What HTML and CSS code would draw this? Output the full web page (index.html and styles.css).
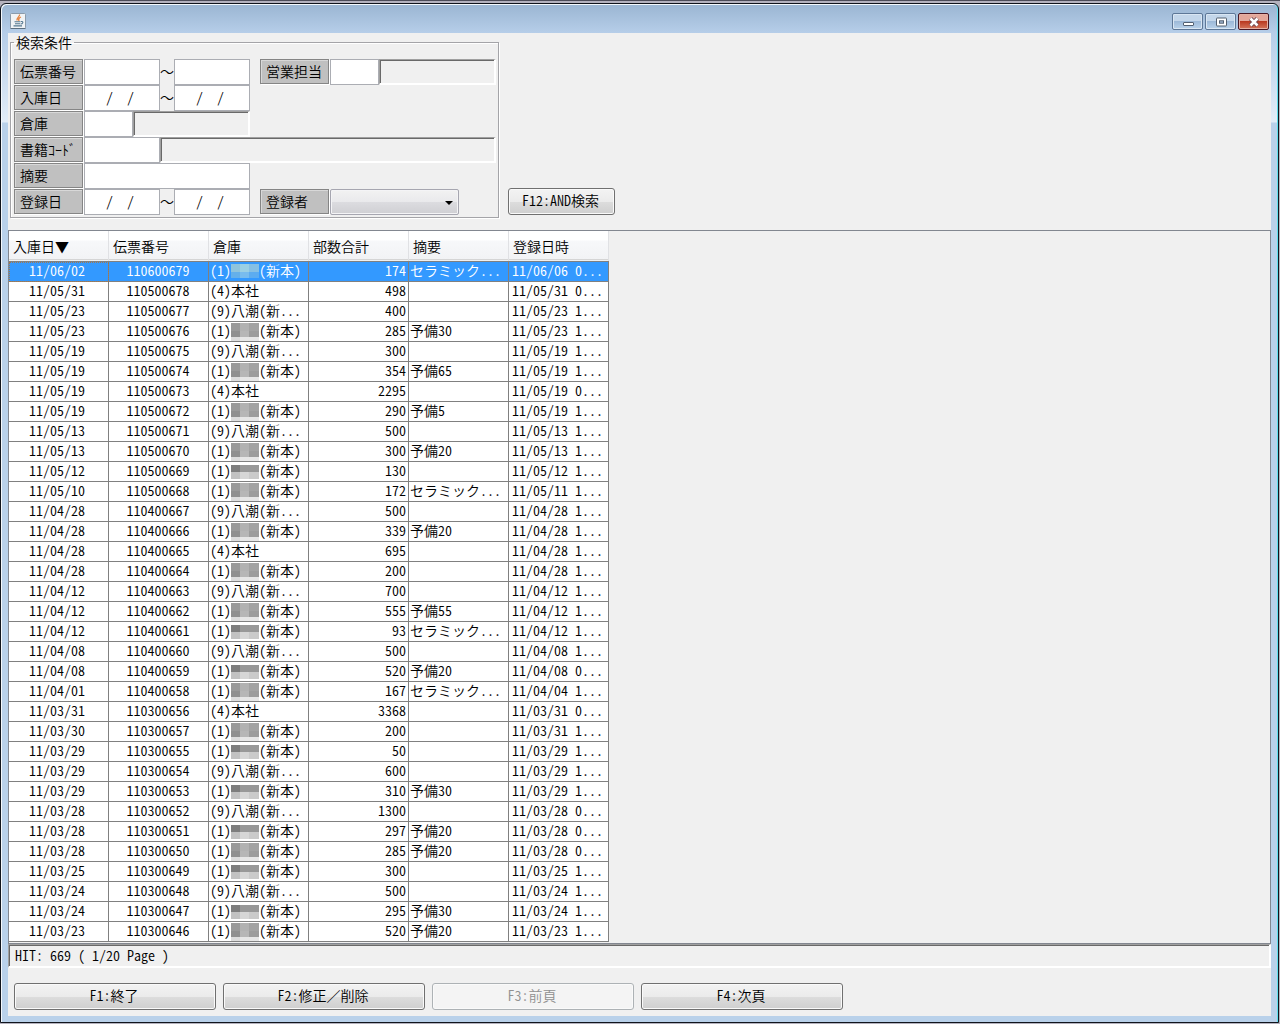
FILE: index.html
```html
<!DOCTYPE html>
<html lang="ja">
<head>
<meta charset="utf-8">
<title>入庫検索</title>
<link rel="stylesheet" href="styles.css">
</head>
<body>
<div class="window">
  <header class="titlebar">
    <svg class="app-icon" width="16" height="16" viewBox="0 0 16 16" aria-hidden="true">
      <rect x="0.5" y="0.5" width="15" height="15" rx="1" fill="#f1f3f5" stroke="#8b9bab"/>
      <path d="M0.5 15.5H15.5" stroke="#5d6f80"/>
      <path d="M9.500 1.500C10 4 6 4.500 7.200 7.500M11 4C8 5 8.500 6.500 9 8" fill="none" stroke="#e5803a" stroke-width="1.300"/>
      <path d="M4.500 8.800H10.500M5 10.800H10M11 8.500C14 8 13 11 10.500 11M3.500 12.900H12" fill="none" stroke="#55788f" stroke-width="1.100"/>
    </svg>
    <div class="window-buttons">
      <button class="wb" type="button" aria-label="最小化"><svg width="12" height="12" viewBox="0 0 12 12"><rect x="1.500" y="6.500" width="10" height="3" rx="0.500" fill="#fff" stroke="#536071"/></svg></button>
      <button class="wb" type="button" aria-label="最大化"><svg width="12" height="12" viewBox="0 0 12 12"><rect x="1.500" y="2" width="10" height="8" rx="0.500" fill="#fff" stroke="#536071"/><rect x="4.500" y="4.800" width="4" height="2.400" fill="#9fb6d0" stroke="#536071"/></svg></button>
      <button class="wb wb-close" type="button" aria-label="閉じる"><svg width="12" height="12" viewBox="0 0 12 12"><path d="M2.500 2.500L9.500 9.500M9.500 2.500L2.500 9.500" stroke="#6b4650" stroke-width="4.400"/><path d="M2.500 2.500L9.500 9.500M9.500 2.500L2.500 9.500" stroke="#fff" stroke-width="2.600"/></svg></button>
    </div>
  </header>
  <main class="client">
    <form class="search">
      <fieldset class="conditions">
        <legend>検索条件</legend>
        <div class="line">
          <label class="tag" for="slip-from">伝票番号</label>
          <input class="box w-mid" id="slip-from" type="text"><span class="tilde wide">～</span><input class="box w-mid" type="text" aria-label="伝票番号 終了">
          <label class="tag second" for="sales">営業担当</label>
          <input class="box w-short" id="sales" type="text"><input class="name" type="text" readonly aria-label="営業担当名">
        </div>
        <div class="line">
          <label class="tag" for="in-from">入庫日</label>
          <input class="box w-mid" id="in-from" type="text" value="  /  /  "><span class="tilde wide">～</span><input class="box w-mid" type="text" value="  /  /  " aria-label="入庫日 終了">
        </div>
        <div class="line line-half">
          <label class="tag" for="store">倉庫</label>
          <input class="box w-short" id="store" type="text"><input class="name" type="text" readonly aria-label="倉庫名">
        </div>
        <div class="line">
          <label class="tag" for="book">書籍ｺｰﾄﾞ</label>
          <input class="box w-mid" id="book" type="text"><input class="name" type="text" readonly aria-label="書籍名">
        </div>
        <div class="line line-half">
          <label class="tag" for="memo">摘要</label>
          <input class="box w-fill" id="memo" type="text">
        </div>
        <div class="line">
          <label class="tag" for="reg-from">登録日</label>
          <input class="box w-mid" id="reg-from" type="text" value="  /  /  "><span class="tilde wide">～</span><input class="box w-mid" type="text" value="  /  /  " aria-label="登録日 終了">
          <label class="tag second" for="reg-by">登録者</label>
          <span class="combo"><select id="reg-by"><option></option></select></span>
        </div>
      </fieldset>
      <button class="btn btn-search" type="button">F12:AND検索</button>
    </form>
    <section class="results">
      <table class="grid">
        <thead><tr><th>入庫日▼</th><th>伝票番号</th><th>倉庫</th><th>部数合計</th><th>摘要</th><th>登録日時</th></tr></thead>
        <tbody>
          <tr class="selected"><td>11/06/02</td><td>110600679</td><td>(1)<i class="mask mask-sel"></i>(新本)</td><td>174</td><td>セラミック...</td><td>11/06/06 0...</td></tr>
          <tr><td>11/05/31</td><td>110500678</td><td>(4)本社</td><td>498</td><td></td><td>11/05/31 0...</td></tr>
          <tr><td>11/05/23</td><td>110500677</td><td>(9)八潮(新...</td><td>400</td><td></td><td>11/05/23 1...</td></tr>
          <tr><td>11/05/23</td><td>110500676</td><td>(1)<i class="mask"></i>(新本)</td><td>285</td><td>予備30</td><td>11/05/23 1...</td></tr>
          <tr><td>11/05/19</td><td>110500675</td><td>(9)八潮(新...</td><td>300</td><td></td><td>11/05/19 1...</td></tr>
          <tr><td>11/05/19</td><td>110500674</td><td>(1)<i class="mask"></i>(新本)</td><td>354</td><td>予備65</td><td>11/05/19 1...</td></tr>
          <tr><td>11/05/19</td><td>110500673</td><td>(4)本社</td><td>2295</td><td></td><td>11/05/19 0...</td></tr>
          <tr><td>11/05/19</td><td>110500672</td><td>(1)<i class="mask"></i>(新本)</td><td>290</td><td>予備5</td><td>11/05/19 1...</td></tr>
          <tr><td>11/05/13</td><td>110500671</td><td>(9)八潮(新...</td><td>500</td><td></td><td>11/05/13 1...</td></tr>
          <tr><td>11/05/13</td><td>110500670</td><td>(1)<i class="mask"></i>(新本)</td><td>300</td><td>予備20</td><td>11/05/13 1...</td></tr>
          <tr><td>11/05/12</td><td>110500669</td><td>(1)<i class="mask mask-low"></i>(新本)</td><td>130</td><td></td><td>11/05/12 1...</td></tr>
          <tr><td>11/05/10</td><td>110500668</td><td>(1)<i class="mask"></i>(新本)</td><td>172</td><td>セラミック...</td><td>11/05/11 1...</td></tr>
          <tr><td>11/04/28</td><td>110400667</td><td>(9)八潮(新...</td><td>500</td><td></td><td>11/04/28 1...</td></tr>
          <tr><td>11/04/28</td><td>110400666</td><td>(1)<i class="mask"></i>(新本)</td><td>339</td><td>予備20</td><td>11/04/28 1...</td></tr>
          <tr><td>11/04/28</td><td>110400665</td><td>(4)本社</td><td>695</td><td></td><td>11/04/28 1...</td></tr>
          <tr><td>11/04/28</td><td>110400664</td><td>(1)<i class="mask"></i>(新本)</td><td>200</td><td></td><td>11/04/28 1...</td></tr>
          <tr><td>11/04/12</td><td>110400663</td><td>(9)八潮(新...</td><td>700</td><td></td><td>11/04/12 1...</td></tr>
          <tr><td>11/04/12</td><td>110400662</td><td>(1)<i class="mask"></i>(新本)</td><td>555</td><td>予備55</td><td>11/04/12 1...</td></tr>
          <tr><td>11/04/12</td><td>110400661</td><td>(1)<i class="mask mask-low"></i>(新本)</td><td>93</td><td>セラミック...</td><td>11/04/12 1...</td></tr>
          <tr><td>11/04/08</td><td>110400660</td><td>(9)八潮(新...</td><td>500</td><td></td><td>11/04/08 1...</td></tr>
          <tr><td>11/04/08</td><td>110400659</td><td>(1)<i class="mask mask-low"></i>(新本)</td><td>520</td><td>予備20</td><td>11/04/08 0...</td></tr>
          <tr><td>11/04/01</td><td>110400658</td><td>(1)<i class="mask"></i>(新本)</td><td>167</td><td>セラミック...</td><td>11/04/04 1...</td></tr>
          <tr><td>11/03/31</td><td>110300656</td><td>(4)本社</td><td>3368</td><td></td><td>11/03/31 0...</td></tr>
          <tr><td>11/03/30</td><td>110300657</td><td>(1)<i class="mask"></i>(新本)</td><td>200</td><td></td><td>11/03/31 1...</td></tr>
          <tr><td>11/03/29</td><td>110300655</td><td>(1)<i class="mask mask-low"></i>(新本)</td><td>50</td><td></td><td>11/03/29 1...</td></tr>
          <tr><td>11/03/29</td><td>110300654</td><td>(9)八潮(新...</td><td>600</td><td></td><td>11/03/29 1...</td></tr>
          <tr><td>11/03/29</td><td>110300653</td><td>(1)<i class="mask mask-low"></i>(新本)</td><td>310</td><td>予備30</td><td>11/03/29 1...</td></tr>
          <tr><td>11/03/28</td><td>110300652</td><td>(9)八潮(新...</td><td>1300</td><td></td><td>11/03/28 0...</td></tr>
          <tr><td>11/03/28</td><td>110300651</td><td>(1)<i class="mask mask-low"></i>(新本)</td><td>297</td><td>予備20</td><td>11/03/28 0...</td></tr>
          <tr><td>11/03/28</td><td>110300650</td><td>(1)<i class="mask"></i>(新本)</td><td>285</td><td>予備20</td><td>11/03/28 0...</td></tr>
          <tr><td>11/03/25</td><td>110300649</td><td>(1)<i class="mask mask-low"></i>(新本)</td><td>300</td><td></td><td>11/03/25 1...</td></tr>
          <tr><td>11/03/24</td><td>110300648</td><td>(9)八潮(新...</td><td>500</td><td></td><td>11/03/24 1...</td></tr>
          <tr><td>11/03/24</td><td>110300647</td><td>(1)<i class="mask mask-low"></i>(新本)</td><td>295</td><td>予備30</td><td>11/03/24 1...</td></tr>
          <tr><td>11/03/23</td><td>110300646</td><td>(1)<i class="mask"></i>(新本)</td><td>520</td><td>予備20</td><td>11/03/23 1...</td></tr>
        </tbody>
      </table>
    </section>
    <div class="status">HIT: 669 ( 1/20 Page )</div>
    <footer class="actions">
      <button class="btn btn-fn" type="button">F1:終了</button>
      <button class="btn btn-fn" type="button">F2:修正<span class="wide">／</span>削除</button>
      <button class="btn btn-fn" type="button" disabled>F3:前頁</button>
      <button class="btn btn-fn" type="button">F4:次頁</button>
    </footer>
  </main>
</div>
</body>
</html>
```

FILE: styles.css
```css
* { box-sizing: border-box; }

body {
  margin: 0;
  min-height: 100vh;
  padding: 3px 1px 1px 0;
  display: flex;
  background: linear-gradient(#4c4c58 1px, #b4b2be 1px);
}

/* hwid gives half-width Latin digits and letters, so columns of text line up */
body, button, input, select {
  font-family: "Noto Sans CJK JP", "Liberation Mono", monospace;
  font-size: 14px;
  font-weight: 350;
  font-feature-settings: "hwid";
  line-height: 18px;
  color: #000;
}

/* full-width punctuation keeps its own width */
.wide { font-feature-settings: normal; }

.window {
  flex: 1;
  display: flex;
  flex-direction: column;
  padding: 0 7px 6px;
  border: 1px solid #10141c;
  border-radius: 6px 6px 0 0;
  background: linear-gradient(#9ab5d2, #b5cde8 28px, #e2edf8 118px, #b9d1ea 119px);
  box-shadow: inset 1px 1px #f4f8fc, inset -1px 0 #5fe0ee;
}

.titlebar {
  height: 29px;
  padding: 9px 2px 0;
  display: flex;
  justify-content: space-between;
}

.window-buttons { display: flex; gap: 2px; }

.wb {
  width: 31px;
  height: 17px;
  padding: 0;
  display: flex;
  align-items: center;
  justify-content: center;
  border: 1px solid #5d7797;
  border-radius: 2px;
  background: linear-gradient(#c3d6ea 50%, #9db9d8 50%, #b9d2ea);
  box-shadow: inset 0 0 0 1px #d9e6f3;
}

.wb-close {
  border-color: #481824;
  background: linear-gradient(#e3a79a 45%, #b93a22 50%, #d5765c);
  box-shadow: inset 0 0 0 1px #e5b0a4;
}

.client {
  flex: 1;
  display: flex;
  flex-direction: column;
  background: #f0f0f0;
}

.search {
  display: flex;
  align-items: flex-end;
  gap: 9px;
  padding: 1px 2px 12px;
}

.conditions {
  width: 489px;
  min-width: 0;
  margin: 0;
  padding: 9px 2px 2px 3px;
  border: 1px solid #a4a4a8;
  box-shadow: 1px 1px #fff, inset 1px 1px #fff;
}

.conditions legend {
  padding: 0 2px;
  line-height: 16px;
}

.line { display: flex; height: 26px; }
.line-half { width: 236px; }

.tag {
  flex: none;
  width: 69px;
  height: 25px;
  margin-right: 1px;
  padding-left: 5px;
  line-height: 23px;
  white-space: nowrap;
  border: 1px solid #858585;
  box-shadow: inset 1px 1px #d8d8d8, 1px 1px #fff;
  background: #c0c0c0;
}

.second { margin-left: 10px; }

.box {
  flex: none;
  padding: 0 7px 3px;
  border: 1px solid #abadb3;
  border-radius: 0;
  background: #fff;
}

.w-mid { width: 76px; }
.w-short { width: 49px; }
.w-fill { flex: 1; min-width: 0; }

.tilde { flex: none; width: 14px; line-height: 25px; }

.name {
  flex: 1;
  min-width: 0;
  border: solid;
  border-width: 1px 2px 2px 1px;
  border-color: #a0a0a0 #fff #fff #a0a0a0;
  box-shadow: inset 1px 1px #696969;
  background: #f0f0f0;
}

.combo { position: relative; display: flex; width: 129px; }

.combo select {
  flex: 1;
  appearance: none;
  border: 1px solid #a6a6b0;
  border-radius: 2px;
  background: linear-gradient(#f2f2f2, #e9e9ec 50%, #dcdce0 50%, #cfcfd3);
  box-shadow: inset 0 0 0 1px #f4f4f6;
}

.combo::after {
  content: "";
  position: absolute;
  right: 6px;
  top: 12px;
  border: solid transparent;
  border-width: 4px 4px 0;
  border-top-color: #000;
  pointer-events: none;
}

.btn {
  height: 27px;
  padding: 0 2px 4px 0;
  border: 1px solid #707070;
  border-radius: 3px;
  background: linear-gradient(#f3f3f3, #ebebeb 50%, #dddddd 50%, #cfcfcf);
  box-shadow: inset 0 0 0 1px #fafafa;
}

.btn:disabled {
  border-color: #adb2b5;
  background: #f4f4f4;
  color: #909090;
}

.btn-search { width: 107px; margin-bottom: 3px; }

.results {
  flex: 1;
  border: 1px solid #828790;
}

.grid {
  width: 600px;
  table-layout: fixed;
  border-spacing: 0;
}

.grid th {
  height: 31px;
  padding: 0 4px;
  text-align: left;
  font-weight: 350;
  border-bottom: 1px solid #808080;
  background: linear-gradient(#fff 9px, #f7f8fa 10px, #f2f3f5 28px, #d5d5d5 28px, #d5d5d5 29px, #f0f0f0 29px);
  box-shadow: inset -1px 0 #e0e1e4;
}

.grid td {
  height: 20px;
  padding: 0 1px;
  line-height: 17px;
  vertical-align: top;
  white-space: pre;
  background: #fff;
  border-right: 1px solid #808080;
  border-bottom: 1px solid #808080;
}

.grid td:nth-child(1) { text-align: center; padding-right: 4px; }
.grid td:nth-child(2) { text-align: center; padding-right: 2px; }
.grid td:nth-child(4) { text-align: right; padding-right: 2px; }
.grid td:nth-child(6) { padding-left: 3px; }

.grid .selected td { background: #3399ff; color: #fff; }
.grid .selected td:first-child { outline: 1px dotted #a07850; outline-offset: -1px; }

.mask {
  display: inline-block;
  width: 28px;
  height: 19px;
  vertical-align: top;
  background:
    linear-gradient(90deg, #999 9px, #b2b2b2 9px 18px, #a3a3a3 18px) 0 1px / 28px 8px no-repeat,
    linear-gradient(90deg, #8f8f8f 9px, #b6b6b6 9px 18px, #9c9c9c 18px) 0 9px / 28px 6px no-repeat,
    linear-gradient(90deg, #dcdcdc 9px, #e6e6e6 9px) 0 15px / 28px 4px no-repeat;
}

.mask-low {
  background:
    linear-gradient(90deg, #7e7e7e 9px, #989898 9px) 0 3px / 28px 7px no-repeat,
    linear-gradient(90deg, #c2c2c2 9px, #d6d6d6 9px 18px, #cacaca 18px) 0 10px / 28px 7px no-repeat;
}

.mask-sel {
  background:
    linear-gradient(90deg, #8fc4dc 9px, #9bd0e4 9px 18px, #86c0e4 18px) 0 2px / 28px 8px no-repeat,
    linear-gradient(90deg, #64b0ea 9px, #78bcee 9px 18px, #5cacf0 18px) 0 10px / 28px 6px no-repeat;
}

.status {
  height: 24px;
  padding: 0 6px;
  line-height: 20px;
  white-space: pre;
  border: solid;
  border-width: 1px 2px 2px 1px;
  border-color: #a0a0a0 #fff #fff #a0a0a0;
  box-shadow: inset 1px 1px #696969;
}

.actions {
  display: flex;
  gap: 7px;
  padding: 15px 6px 6px;
}

.btn-fn { width: 202px; }
```
